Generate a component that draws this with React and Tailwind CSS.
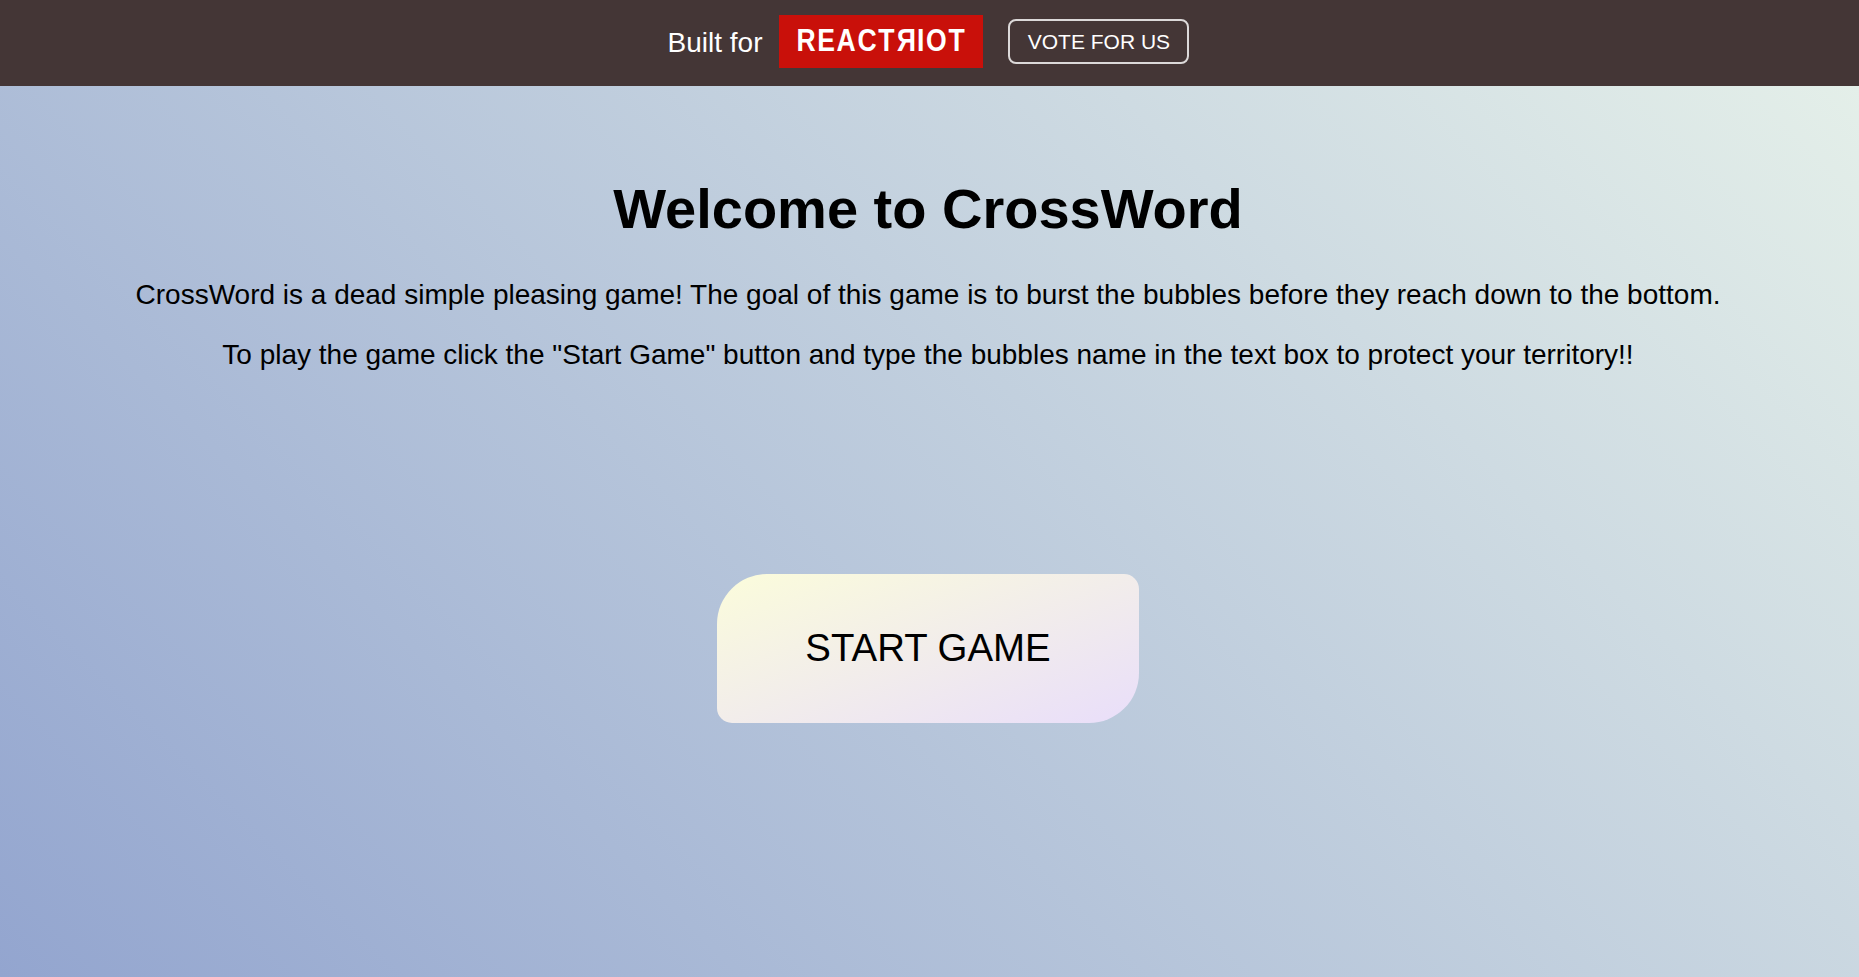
import React from 'react';

function Header() {
    return (
        <header className="h-[86px] pb-[3px] bg-[#443636] flex items-center justify-center pr-[2px] font-['Liberation_Sans',Arial,sans-serif]">
            <span className="pt-[2px] text-white text-[28px] leading-none">Built for</span>
            <a href="#" className="ml-[17px] w-[204px] h-[53px] pb-[3px] bg-[#c9100a] flex items-center justify-center whitespace-nowrap text-white text-[32px] font-bold tracking-[2px] leading-none">
                <span className="inline-block shrink-0 scale-x-[0.83]">
                    REACT<span className="inline-block mx-[1px] tracking-normal -scale-x-100">R</span>IOT
                </span>
            </a>
            <a href="#" className="ml-[25px] w-[181px] h-[45px] border-2 border-[#dcd9d9] rounded-lg flex items-center justify-center text-white text-[21px] leading-none">
                VOTE FOR US
            </a>
        </header>
    );
}

function App() {
    return (
        <div className="min-h-[977px] flex flex-col font-['Liberation_Sans',Arial,sans-serif] text-black">
            <Header />
            <main className="flex-1 flex flex-col items-center pr-[3px] bg-[linear-gradient(45deg,#93a5cf_0%,#e4efe9_100%)]">
                <h1 className="mt-[91px] text-[56px] leading-[64px] font-bold">Welcome to CrossWord</h1>
                <p className="mt-[38px] text-[28px] leading-[32px]">
                    CrossWord is a dead simple pleasing game! The goal of this game is to burst the bubbles before they reach down to the bottom.
                </p>
                <p className="mt-[28px] text-[28px] leading-[32px]">
                    To play the game click the "Start Game" button and type the bubbles name in the text box to protect your territory!!
                </p>
                <button className="mt-[203px] w-[422px] h-[149px] rounded-tl-[50px] rounded-br-[50px] rounded-tr-[15px] rounded-bl-[15px] bg-[linear-gradient(to_bottom_right,#fbfcdb_0%,#e9defa_100%)] text-[38.4px] leading-none">
                    START GAME
                </button>
            </main>
        </div>
    );
}

export default App;
